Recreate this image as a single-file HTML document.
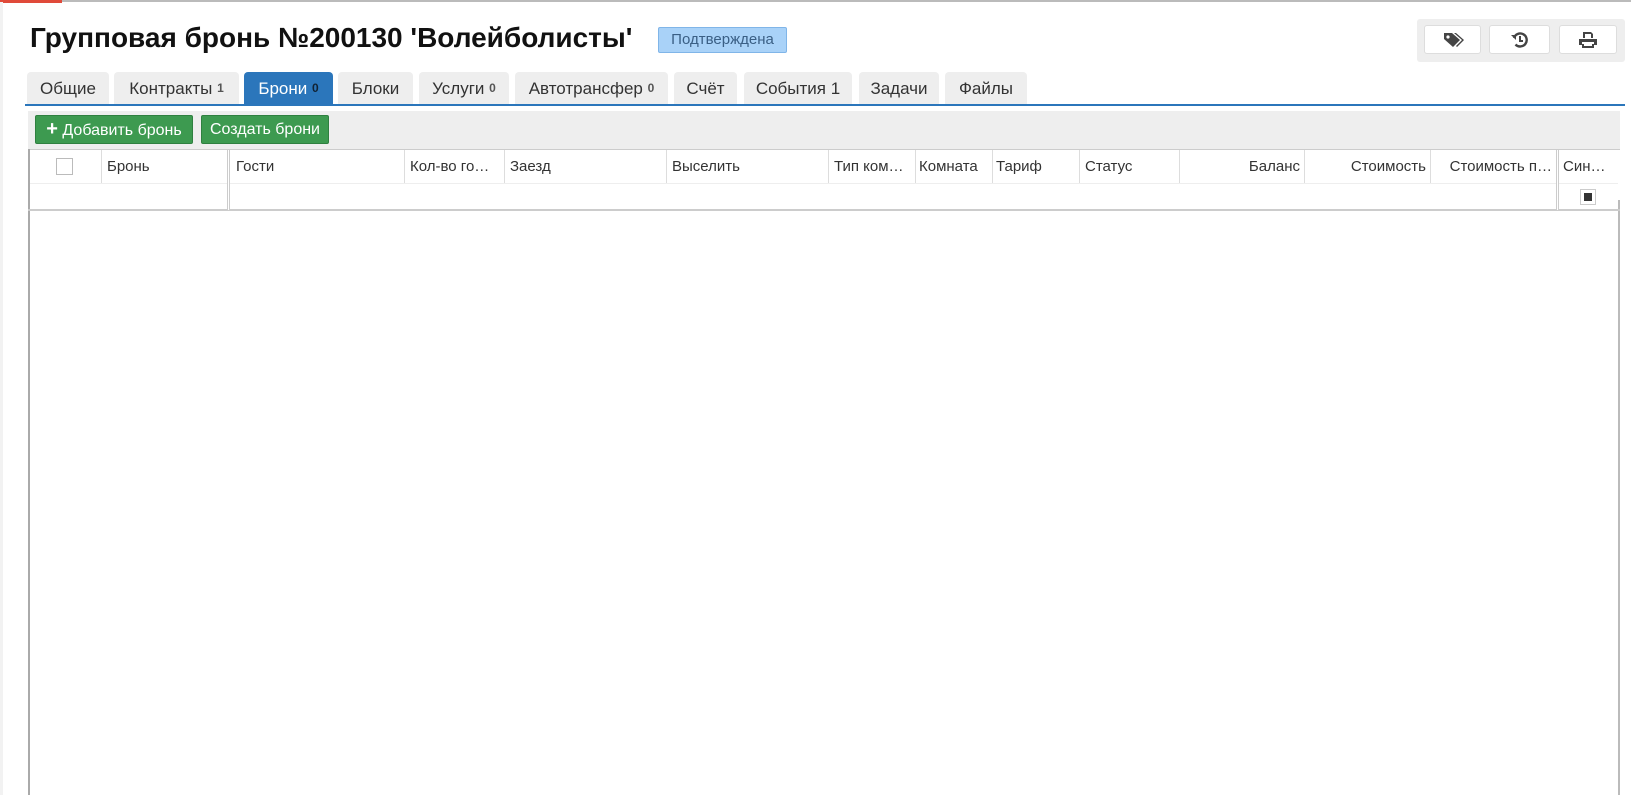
<!DOCTYPE html>
<html><head><meta charset="utf-8"><style>
*{box-sizing:border-box;margin:0;padding:0}
body{width:1631px;height:795px;overflow:hidden;background:#fff;font-family:"Liberation Sans",sans-serif;position:relative;color:#222}
.a{position:absolute}
.tab{position:absolute;top:72px;height:33px;background:#eee;border-radius:4px 4px 0 0;font-size:17px;line-height:33px;text-align:center;color:#333}
.tab sup{font-size:12px;vertical-align:2px;color:#555;font-weight:bold}
.btn{position:absolute;top:115px;height:29px;background:#3d9a50;border:1px solid #2f8040;border-radius:2px;color:#fff;font-size:16px;line-height:27px;text-align:center}
.th{position:absolute;top:150px;height:33px;font-size:15px;line-height:33px;padding-left:6px;white-space:nowrap;overflow:hidden;color:#333}
.vl{position:absolute;top:150px;height:33px;width:1px;background:#ddd}
.ib{position:absolute;top:25px;height:29px;background:#fff;border:1px solid #ddd;border-radius:3px}
</style></head><body>
<div class="a" style="left:0;top:0;width:1631px;height:2px;background:#bbb"></div>
<div class="a" style="left:0;top:0;width:62px;height:3px;background:#e04a3a"></div>
<div class="a" style="left:0;top:2px;width:3px;height:793px;background:#f2f2f2"></div>
<div class="a" style="left:30px;top:22px;font-size:28px;font-weight:bold;color:#111;white-space:nowrap">Групповая бронь №200130 'Волейболисты'</div>
<div class="a" style="left:658px;top:27px;width:129px;height:26px;background:#a9d2f8;border:1px solid #80b5e8;border-radius:2px;font-size:15px;line-height:24px;text-align:center;color:#3a5f85">Подтверждена</div>
<div class="a" style="left:1417px;top:19px;width:208px;height:43px;background:#eee;border-radius:3px"></div>
<div class="ib" style="left:1424px;width:57px"><svg class="a" style="left:18px;top:5px" width="22" height="18" viewBox="0 0 22 18"><path d="M1 2h8l8 7-7 7-9-8z" fill="#444"/><circle cx="5" cy="6" r="1.6" fill="#fff"/><path d="M11 2h2l8 7-7 7-1-1 6-6z" fill="#444"/></svg></div>
<div class="ib" style="left:1489px;width:61px"><svg class="a" style="left:21px;top:5px" width="18" height="18" viewBox="0 0 18 18"><path d="M3 7a6.5 6.5 0 1 1 1.5 6.5" fill="none" stroke="#444" stroke-width="2.4"/><path d="M0 4l5 0 0 5z" fill="#444"/><path d="M9 5v5h3" fill="none" stroke="#444" stroke-width="2"/></svg></div>
<div class="ib" style="left:1559px;width:58px"><svg class="a" style="left:19px;top:6px" width="18" height="16" viewBox="0 0 18 16"><path d="M4 0h8l2 2v4H4z" fill="#444"/><rect x="6" y="2" width="6" height="4" fill="#fff"/><path d="M0 7h18v6h-3v-3H3v3H0z" fill="#444"/><rect x="3" y="12" width="12" height="4" fill="#444"/><rect x="5" y="12" width="8" height="2" fill="#fff"/></svg></div>

<div class="tab" style="left:27px;width:82px">Общие</div>
<div class="tab" style="left:114px;width:125px">Контракты <sup>1</sup></div>
<div class="tab" style="left:244px;width:89px;background:#2b76bb;color:#fff">Брони <sup style="color:#123">0</sup></div>
<div class="tab" style="left:338px;width:75px">Блоки</div>
<div class="tab" style="left:419px;width:90px">Услуги <sup>0</sup></div>
<div class="tab" style="left:515px;width:153px">Автотрансфер <sup>0</sup></div>
<div class="tab" style="left:674px;width:63px">Счёт</div>
<div class="tab" style="left:744px;width:108px">События 1</div>
<div class="tab" style="left:859px;width:80px">Задачи</div>
<div class="tab" style="left:945px;width:82px">Файлы</div>
<div class="a" style="left:25px;top:104px;width:1600px;height:2px;background:#2b76bb"></div>

<div class="a" style="left:28px;top:111px;width:1592px;height:39px;background:#eee"></div>
<div class="btn" style="left:35px;width:158px"><b style="font-size:20px">+</b> Добавить бронь</div>
<div class="btn" style="left:201px;width:128px">Создать брони</div>

<div class="a" style="left:28px;top:149px;width:1592px;height:1px;background:#ccc"></div>
<div class="a" style="left:28px;top:149px;width:2px;height:646px;background:#aaa"></div>
<div class="a" style="left:1618px;top:200px;width:2px;height:595px;background:#bbb"></div>
<div class="a" style="left:30px;top:183px;width:1588px;height:1px;background:#eee"></div>
<div class="a" style="left:28px;top:209px;width:1592px;height:2px;background:#ccc"></div>
<div class="a" style="left:56px;top:158px;width:17px;height:17px;border:1px solid #bbb;background:#fff"></div>
<div class="vl" style="left:101px"></div>
<div class="vl" style="left:227px;width:3px;height:60px;border-left:1px solid #ccc;border-right:1px solid #ccc;background:#fff"></div>
<div class="vl" style="left:404px"></div><div class="vl" style="left:504px"></div><div class="vl" style="left:666px"></div>
<div class="vl" style="left:828px"></div><div class="vl" style="left:915px"></div><div class="vl" style="left:992px"></div><div class="vl" style="left:1079px"></div><div class="vl" style="left:1179px"></div><div class="vl" style="left:1304px"></div><div class="vl" style="left:1430px"></div>
<div class="vl" style="left:1556px;width:3px;height:60px;border-left:1px solid #ccc;border-right:1px solid #ccc;background:#fff"></div>
<div class="th" style="left:101px;width:126px">Бронь</div>
<div class="th" style="left:230px;width:174px">Гости</div>
<div class="th" style="left:404px;width:100px">Кол-во го…</div>
<div class="th" style="left:504px;width:162px">Заезд</div>
<div class="th" style="left:666px;width:162px">Выселить</div>
<div class="th" style="left:828px;width:87px">Тип ком…</div>
<div class="th" style="left:915px;width:77px;padding-left:4px">Комната</div>
<div class="th" style="left:992px;width:87px;padding-left:4px">Тариф</div>
<div class="th" style="left:1079px;width:100px">Статус</div>
<div class="th" style="left:1179px;width:125px;text-align:right;padding-right:4px">Баланс</div>
<div class="th" style="left:1304px;width:126px;text-align:right;padding-right:4px">Стоимость</div>
<div class="th" style="left:1430px;width:126px;text-align:right;padding-right:4px">Стоимость п…</div>
<div class="th" style="left:1559px;width:59px;padding-left:4px">Син…</div>
<div class="a" style="left:1580px;top:189px;width:16px;height:16px;border:1px solid #ccc;background:#fff"><div class="a" style="left:3px;top:3px;width:8px;height:8px;background:#333"></div></div>
</body></html>
